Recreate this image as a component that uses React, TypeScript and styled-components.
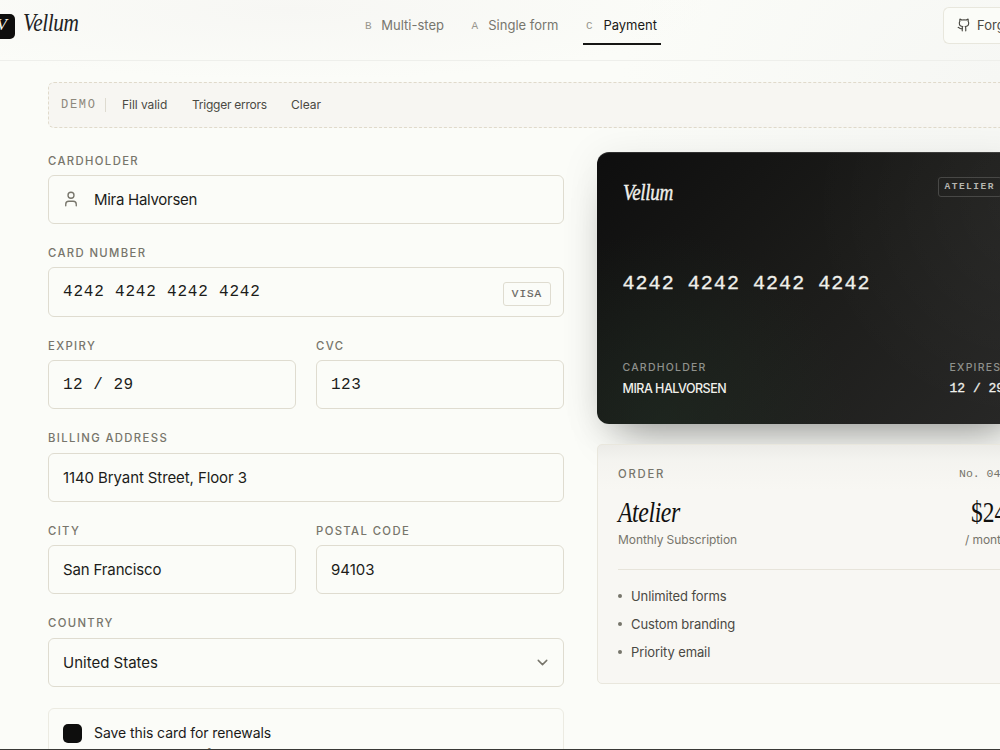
import React from "react";
import styled, { createGlobalStyle } from "styled-components";
import { Github, User, ChevronDown } from "lucide-react";

const sans = `Inter, "Liberation Sans", sans-serif`;
const mono = `"Liberation Mono", monospace`;
const serif = `"Liberation Serif", serif`;

const Global = createGlobalStyle`
  *{box-sizing:border-box}
  html,body{margin:0;padding:0;background:#fbfcf8;overflow:hidden}
  body{font-family:${sans};color:#1a1a18}
`;
const Page = styled.div`
  width:1000px;height:750px;overflow:hidden;border-bottom:1px solid #393936;
  background:radial-gradient(ellipse 420px 70px at 290px 10px,#f7f7f4,#f7f7f400),
    radial-gradient(ellipse 380px 260px at 1000px 80px,#f6f7f4,#f6f7f400),#fbfcf8;
`;
const Header = styled.header`
  height:61px;border-bottom:1px solid #eeefeb;display:flex;align-items:flex-start;
`;
const Brand = styled.div`
  display:flex;width:372px;margin-left:-10px;gap:8px;flex:none;
`;
const Tile = styled.div`
  width:25px;height:25px;margin-top:14px;border-radius:5px;background:#0e0e0d;color:#f7f7f2;
  font:italic 17px/22px ${serif};text-align:right;padding-right:8px;
`;
const Condensed = styled.span<{ $size: number; $x: number; $lh: number; $ls?: number; $roman?: boolean; $stroke?: number }>`
  display:inline-block;white-space:nowrap;transform-origin:0 50%;transform:scaleX(${p => p.$x});
  font:${p => (p.$roman ? "normal" : "italic")} 400 ${p => p.$size}px/${p => p.$lh}px ${serif};
  letter-spacing:${p => p.$ls ?? 0}px;-webkit-text-stroke:${p => p.$stroke ?? 0}px;
`;
const BrandName = styled.div`margin-top:8px;color:#22221f;`;
const Nav = styled.nav`display:flex;align-items:flex-start;gap:20.5px;height:45px;`;
const Tab = styled.a<{ $w: number; $on?: boolean }>`
  width:${p => p.$w}px;height:45px;
  display:flex;justify-content:space-between;padding:15px 4px 0 3px;line-height:20px;font-size:13px;
  color:${p => (p.$on ? "#1a1a18" : "#77766e")};border-bottom:2px solid ${p => (p.$on ? "#161614" : "transparent")};
  white-space:nowrap;
`;
const Key = styled.span`font:11px/22px ${mono};color:#99978e;`;
const T = styled.span<{ $ls?: number }>`letter-spacing:${p => p.$ls ?? 0}px;white-space:nowrap;`;
const Fork = styled.button`
  margin:7px 0 0 auto;width:57px;height:37px;flex:none;border:1px solid #e8e7dd;border-right:0;border-radius:6px 0 0 6px;
  background:#fbfcf8;display:flex;align-items:center;justify-content:flex-start;gap:6.5px;padding:0 0 1px 12.5px;font:13px ${sans};color:#4a4943;overflow:hidden;
  svg{flex:none;}
`;
const Main = styled.main`width:979px;margin:21px 0 0 48px;`;
const Demo = styled.div`
  height:46px;border:1px dashed #e0dacb;border-radius:6px;background:#f7f6f2;
  display:flex;align-items:center;padding:0 0 1px 12px;font-size:12px;color:#4a4943;
`;
const DemoTag = styled.span`
  font:12px/14px ${mono};letter-spacing:1.7px;color:#8d887c;width:45px;border-right:1px solid #dedbd0;margin-right:16px;
`;
const DemoAction = styled.span<{ $w: number; $ls: number }>`width:${p => p.$w}px;letter-spacing:${p => p.$ls}px;white-space:nowrap;`;
const Columns = styled.div`display:grid;grid-template-columns:516px 430px;column-gap:33px;align-items:start;margin-top:24px;`;
const Form = styled.form`display:flex;flex-direction:column;padding-top:1.5px;`;
const Row = styled.div`display:grid;grid-template-columns:1fr 1fr;gap:20px;`;
const Field = styled.div<{ $last?: boolean }>`margin-bottom:${p => (p.$last ? 20.6 : 22)}px;`;
const Label = styled.div`
  font-size:11.3px;line-height:14px;font-weight:500;letter-spacing:1.38px;color:#77756b;height:21.3px;white-space:nowrap;
`;
const Box = styled.div`
  height:49.3px;border:1px solid #dfdcd0;border-radius:6px;background:#fbfcf8;
  display:flex;align-items:center;padding:0 14px;font-size:15px;color:#1c1c1a;white-space:nowrap;
`;
const IconSlot = styled.span`width:31px;margin:0 1px 0 -1px;display:flex;color:#77756b;`;
const Num = styled.span<{ $ls?: number }>`font:16px ${mono};letter-spacing:${p => p.$ls ?? 0.8}px;white-space:pre;`;
const Brandmark = styled.span`
  margin:4px -2px 0 auto;width:48px;height:24px;border:1px solid #dfdcd0;border-radius:3px;text-align:center;
  font:11px/23px ${mono};letter-spacing:1px;color:#66645c;-webkit-text-stroke:.2px;
`;
const Chevron = styled.span`margin:1px -2px 0 auto;display:flex;color:#77756b;`;
const Save = styled.div`
  height:80px;border:1px solid #ecebe2;border-radius:6px;padding:15.5px 14px;display:flex;gap:12px;
`;
const Check = styled.span`width:19px;height:19px;border-radius:5px;background:#0e0e0d;flex:none;`;
const SaveText = styled.div`font-size:14px;line-height:18px;white-space:nowrap;`;
const SaveNote = styled.div`font-size:12px;line-height:18px;margin-top:3px;letter-spacing:.1px;color:#77756b;`;
const Card = styled.section`
  height:271.5px;border-radius:12px;padding:25px 25.5px;color:#f0f0eb;display:flex;flex-direction:column;
  background:radial-gradient(circle at 15% 100%,#20302477,transparent 42%),radial-gradient(circle at 100% 20%,#ffffff09,transparent 45%),linear-gradient(135deg,#0e0e0e,#1c1c1a 50%,#282827);
  box-shadow:0 26px 40px -20px #00000066,0 4px 40px #00000014,inset 0 1px 0 #ffffff22;
`;
const Between = styled.div`display:flex;justify-content:space-between;align-items:flex-start;`;
const Tier = styled.span`
  width:64px;height:20px;border:1px solid #484846;border-radius:3px;font:700 9.5px/18px ${mono};letter-spacing:1.5px;
  padding-left:6px;color:#b5b5b0;white-space:nowrap;
`;
const Pan = styled.div`font:20px/24px ${mono};letter-spacing:1.05px;-webkit-text-stroke:.3px;margin-top:64px;white-space:pre;`;
const Caption = styled.div`font-size:10.5px;line-height:14px;letter-spacing:1.22px;color:#8f918c;font-weight:500;`;
const Foot = styled(Between)`margin-top:64.5px;`;
const Holder = styled.div`font-size:12.5px;line-height:18px;font-weight:500;letter-spacing:-.5px;margin-top:5.5px;`;
const Exp = styled.div`font:13px/18px ${mono};-webkit-text-stroke:.3px;white-space:pre;margin-top:5.5px;`;
const Expires = styled.div`width:52px;white-space:nowrap;`;
const Order = styled.section`
  height:240px;margin-top:20.5px;border:1px solid #e9e7dd;border-radius:5px;padding:22px 20px;
  background:linear-gradient(#dcdcd870,#eeeeea60 16px,#f8f7f300 45px),#f8f7f3;
`;
const OrderTitle = styled(Label)`letter-spacing:1.75px;`;
const OrderNo = styled.span`font:11.5px/14px ${mono};color:#77756b;width:47px;white-space:nowrap;`;
const Price = styled.div`width:35px;white-space:nowrap;`;
const Plan = styled.div`color:#11110f;height:42.5px;`;
const Sub = styled.div<{ $pad?: number }>`font-size:12px;letter-spacing:-.08px;line-height:18px;color:#77756b;margin-left:${p => p.$pad ?? 0}px;`;
const Perks = styled.ul`
  margin:20px 0 0;padding:17px 0 0;border-top:1px solid #e7e4da;list-style:none;font-size:13px;line-height:18px;letter-spacing:-.1px;color:#4a4943;
`;
const Perk = styled.li`
  display:flex;align-items:center;gap:9px;height:18px;margin-bottom:10.2px;
  &::before{content:"";width:4px;height:4px;border-radius:50%;background:#77756b;}
`;

export default function App() {
  return (
    <Page>
      <Global />
      <Header>
        <Brand>
          <Tile>V</Tile>
          <BrandName><Condensed $size={26} $x={0.82} $lh={30} $ls={-0.5}>Vellum</Condensed></BrandName>
        </Brand>
        <Nav>
          <Tab $w={86}><Key>B</Key><T>Multi-step</T></Tab>
          <Tab $w={94}><Key>A</Key><T>Single form</T></Tab>
          <Tab $w={78} $on><Key>C</Key><T>Payment</T></Tab>
        </Nav>
        <Fork><Github size={14} /><T>Forge</T></Fork>
      </Header>
      <Main>
        <Demo>
          <DemoTag>DEMO</DemoTag>
          <DemoAction $w={70} $ls={-0.05}>Fill valid</DemoAction>
          <DemoAction $w={99} $ls={-0.25}>Trigger errors</DemoAction>
          <DemoAction $w={50} $ls={0}>Clear</DemoAction>
        </Demo>
        <Columns>
          <Form>
            <Field>
              <Label>CARDHOLDER</Label>
              <Box><IconSlot><User size={18} strokeWidth={1.8} /></IconSlot><T $ls={-0.28}>Mira Halvorsen</T></Box>
            </Field>
            <Field>
              <Label>CARD NUMBER</Label>
              <Box><Num>4242 4242 4242 4242</Num><Brandmark>VISA</Brandmark></Box>
            </Field>
            <Row>
              <Field><Label>EXPIRY</Label><Box><Num $ls={0.5}>12 / 29</Num></Box></Field>
              <Field><Label>CVC</Label><Box><Num $ls={0.5}>123</Num></Box></Field>
            </Row>
            <Field><Label>BILLING ADDRESS</Label><Box><T $ls={-0.1}>1140 Bryant Street, Floor 3</T></Box></Field>
            <Row>
              <Field><Label>CITY</Label><Box><T $ls={-0.14}>San Francisco</T></Box></Field>
              <Field><Label>POSTAL CODE</Label><Box><T>94103</T></Box></Field>
            </Row>
            <Field $last>
              <Label>COUNTRY</Label>
              <Box><T>United States</T><Chevron><ChevronDown size={17} strokeWidth={2.1} /></Chevron></Box>
            </Field>
            <Save>
              <Check />
              <SaveText>
                <T $ls={-0.08}>Save this card for renewals</T>
                <SaveNote>We never store the full number, only a token held by the card processor.</SaveNote>
              </SaveText>
            </Save>
          </Form>
          <div>
            <Card>
              <Between>
                <Condensed $size={23} $x={0.83} $lh={31} $ls={-0.4} $stroke={0.4}>Vellum</Condensed>
                <Tier>ATELIER</Tier>
              </Between>
              <Pan>4242 4242 4242 4242</Pan>
              <Foot>
                <div><Caption>CARDHOLDER</Caption><Holder>MIRA HALVORSEN</Holder></div>
                <Expires><Caption>EXPIRES</Caption><Exp>12 / 29</Exp></Expires>
              </Foot>
            </Card>
            <Order>
              <Between><OrderTitle>ORDER</OrderTitle><OrderNo>No. 042</OrderNo></Between>
              <Between>
                <div>
                  <Plan><Condensed $size={29} $x={0.82} $lh={48} $ls={-0.5}>Atelier</Condensed></Plan>
                  <Sub>Monthly Subscription</Sub>
                </div>
                <Price>
                  <Plan><Condensed $size={30} $x={0.78} $lh={48} $roman>$24</Condensed></Plan>
                  <Sub $pad={-6}>/ month</Sub>
                </Price>
              </Between>
              <Perks>
                <Perk>Unlimited forms</Perk>
                <Perk>Custom branding</Perk>
                <Perk>Priority email</Perk>
              </Perks>
            </Order>
          </div>
        </Columns>
      </Main>
    </Page>
  );
}
